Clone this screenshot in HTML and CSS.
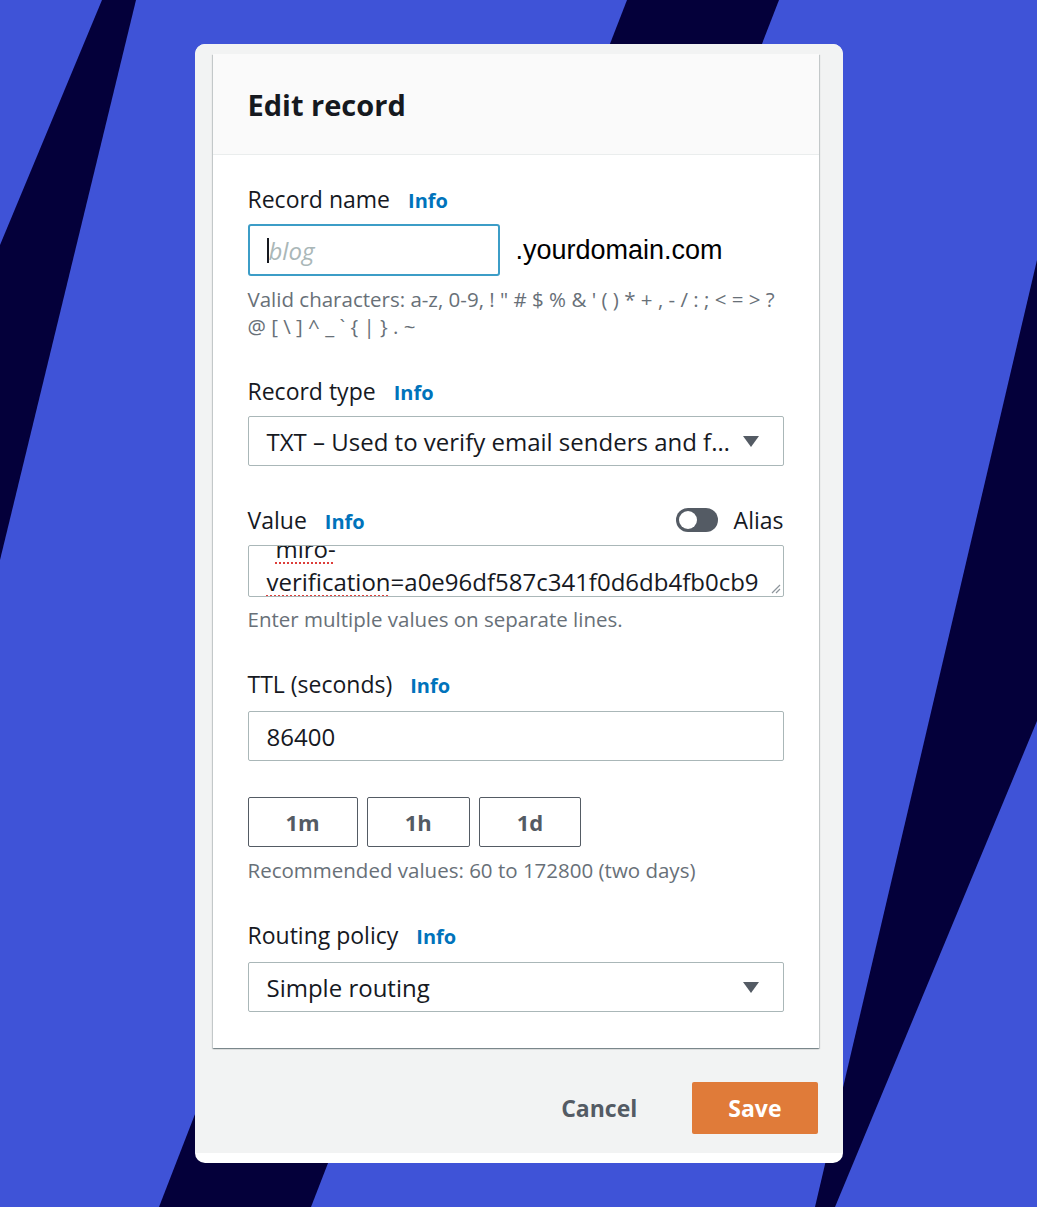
FILE: index.html
```html
<!DOCTYPE html>
<html lang="en">
<head>
  <meta charset="UTF-8" />
  <title>Edit record</title>
  <link rel="stylesheet" href="styles.css">
</head>
<body>
  <svg class="backdrop" viewBox="0 0 1037 1207" preserveAspectRatio="none" aria-hidden="true">
    <polygon points="102,0 136,0 0,560 0,245" />
    <polygon points="627,0 779,0 311,1207 159,1207" />
    <polygon points="1037,260 1037,721 835,1207 815,1207" />
  </svg>

  <div class="modal">
    <div class="sheet">
      <div class="panel">
        <div class="panel-header">
          <h2>Edit record</h2>
        </div>

        <div class="panel-body">
          <div class="field">
            <div class="label-row">
              <label>Record name</label>
              <a class="info">Info</a>
            </div>
            <div class="name-row">
              <div class="control focused"><span class="caret"></span><span class="placeholder">blog</span></div>
              <span class="domain">.yourdomain.com</span>
            </div>
            <p class="hint">Valid characters: a-z, 0-9, ! " # $ % &amp; ' ( ) * + , - / : ; &lt; = &gt; ?<br>@ [ \ ] ^ _ ` { | } . ~</p>
          </div>

          <div class="field field-type">
            <div class="label-row">
              <label>Record type</label>
              <a class="info">Info</a>
            </div>
            <div class="control select">
              <span class="select-text">TXT – Used to verify email senders and f…</span>
              <span class="arrow"></span>
            </div>
          </div>

          <div class="field">
            <div class="label-row">
              <label>Value</label>
              <a class="info">Info</a>
              <span class="alias">
                <span class="toggle"><span class="knob"></span></span>
                Alias
              </span>
            </div>
            <div class="control textarea">
              <div class="textarea-lines">
                <div class="first-line"><span class="typo">miro-</span></div>
                <div><span class="typo">verification</span>=a0e96df587c341f0d6db4fb0cb9</div>
              </div>
              <svg class="grip" width="10" height="10" viewBox="0 0 10 10">
                <path d="M1 9 L9 1 M5 9 L9 5" stroke="#8d959b" stroke-width="1.2" fill="none" />
              </svg>
            </div>
            <p class="hint">Enter multiple values on separate lines.</p>
          </div>

          <div class="field field-ttl">
            <div class="label-row">
              <label>TTL (seconds)</label>
              <a class="info">Info</a>
            </div>
            <div class="control">86400</div>
            <div class="presets">
              <button>1m</button>
              <button>1h</button>
              <button>1d</button>
            </div>
            <p class="hint">Recommended values: 60 to 172800 (two days)</p>
          </div>

          <div class="field field-routing">
            <div class="label-row">
              <label>Routing policy</label>
              <a class="info">Info</a>
            </div>
            <div class="control select">
              <span class="select-text">Simple routing</span>
              <span class="arrow"></span>
            </div>
          </div>
        </div>
      </div>

      <div class="footer">
        <button class="btn-link">Cancel</button>
        <button class="btn-primary">Save</button>
      </div>
    </div>
  </div>
</body>
</html>
```

FILE: styles.css
```css
body {
  margin: 0;
  padding: 0;
  min-height: 1207px;
  background-color: #3f53d7;
  font-family: "Open Sans", Arial, sans-serif;
  color: #16191f;
  position: relative;
  overflow: hidden;
}

.backdrop {
  position: absolute;
  top: 0;
  left: 0;
  width: 1037px;
  height: 1207px;
  fill: #04003a;
}

.modal {
  position: relative;
  width: 648px;
  margin: 44px auto 0 auto;
  background-color: #ffffff;
  border-radius: 10px;
  overflow: hidden;
  padding-bottom: 10px;
}

.sheet {
  background-color: #f2f3f3;
  padding: 10px 24px 0 18px;
}

.panel {
  background-color: #ffffff;
  box-shadow: 0 1px 1px 0 rgba(0, 28, 36, 0.3), 1px 1px 1px 0 rgba(0, 28, 36, 0.15), -1px 1px 1px 0 rgba(0, 28, 36, 0.15);
}

.panel-header {
  height: 101px;
  box-sizing: border-box;
  background-color: #fafafa;
  border-bottom: 1px solid #eaeded;
  display: flex;
  align-items: center;
  padding: 0 35px;
}

h2 {
  margin: 0;
  font-size: 29px;
  font-weight: 700;
  color: #16191f;
}

.panel-body {
  padding: 31px 35px 36px 35px;
}

.field {
  margin-bottom: 38px;
}

.field:last-child {
  margin-bottom: 0;
}

.field-type {
  margin-bottom: 41px;
}

.label-row {
  display: flex;
  align-items: baseline;
  gap: 18px;
  height: 26px;
  line-height: 26px;
  margin-bottom: 12px;
}

.field-ttl .label-row {
  margin-bottom: 14px;
}

.field-routing .label-row {
  margin-bottom: 14px;
}

label {
  font-size: 23px;
}

.info {
  font-size: 20px;
  font-weight: 700;
  color: #0073bb;
}

.alias {
  margin-left: auto;
  display: flex;
  align-items: center;
  align-self: center;
  font-size: 23px;
}

.toggle {
  width: 42px;
  height: 24px;
  border-radius: 12px;
  background-color: #545b64;
  display: flex;
  align-items: center;
  padding: 0 3px;
  box-sizing: border-box;
  margin-right: 16px;
}

.knob {
  width: 18px;
  height: 18px;
  border-radius: 50%;
  background-color: #ffffff;
}

.control {
  height: 50px;
  box-sizing: border-box;
  border: 1px solid #aab7b8;
  border-radius: 2px;
  background-color: #ffffff;
  padding: 0 18px;
  display: flex;
  align-items: center;
  font-size: 24px;
  color: #16191f;
}

.name-row {
  display: flex;
  align-items: center;
  gap: 16px;
}

.control.focused {
  width: 252px;
  height: 52px;
  border: 2px solid #3c9dc7;
  border-radius: 3px;
  padding-left: 17px;
}

.caret {
  width: 2px;
  height: 25px;
  background-color: #16191f;
}

.placeholder {
  font-style: italic;
  color: #aab7b8;
}

.domain {
  font-family: "Liberation Sans", Arial, sans-serif;
  font-size: 27px;
  color: #000000;
}

.select .arrow {
  margin-left: auto;
  width: 0;
  height: 0;
  border-left: 8px solid transparent;
  border-right: 8px solid transparent;
  border-top: 11px solid #545b64;
  margin-right: 6px;
}

.textarea {
  position: relative;
  height: 52px;
  overflow: hidden;
  display: block;
}

.textarea-lines {
  line-height: 33px;
  margin-top: -14px;
  white-space: nowrap;
}

.first-line {
  padding-left: 9px;
}

.typo {
  text-decoration: underline dotted #dd3e3a;
  text-decoration-thickness: 2px;
  text-underline-offset: 4px;
}

.grip {
  position: absolute;
  right: 2px;
  bottom: 2px;
}

.hint {
  margin: 9px 0 0 0;
  font-size: 20.5px;
  line-height: 27px;
  color: #687078;
}

.name-row + .hint {
  margin-top: 10px;
}

.presets + .hint {
  margin-top: 10px;
}

.presets {
  display: flex;
  gap: 9px;
  margin-top: 36px;
}

.presets button {
  height: 50px;
  padding: 0 37px;
  background-color: #ffffff;
  border: 1px solid #545b64;
  border-radius: 2px;
  font-family: "Open Sans", Arial, sans-serif;
  font-size: 22px;
  font-weight: 700;
  color: #545b64;
}

.footer {
  display: flex;
  justify-content: flex-end;
  align-items: center;
  gap: 35px;
  padding: 34px 1px 19px 0;
}

.footer button {
  font-family: "Open Sans", Arial, sans-serif;
  font-size: 23px;
  font-weight: 700;
  border: none;
  border-radius: 2px;
  height: 52px;
  cursor: pointer;
}

.btn-link {
  background: none;
  color: #545b64;
  padding: 0 20px;
}

.btn-primary {
  background-color: #e07b39;
  color: #ffffff;
  padding: 0 36px;
}
```
